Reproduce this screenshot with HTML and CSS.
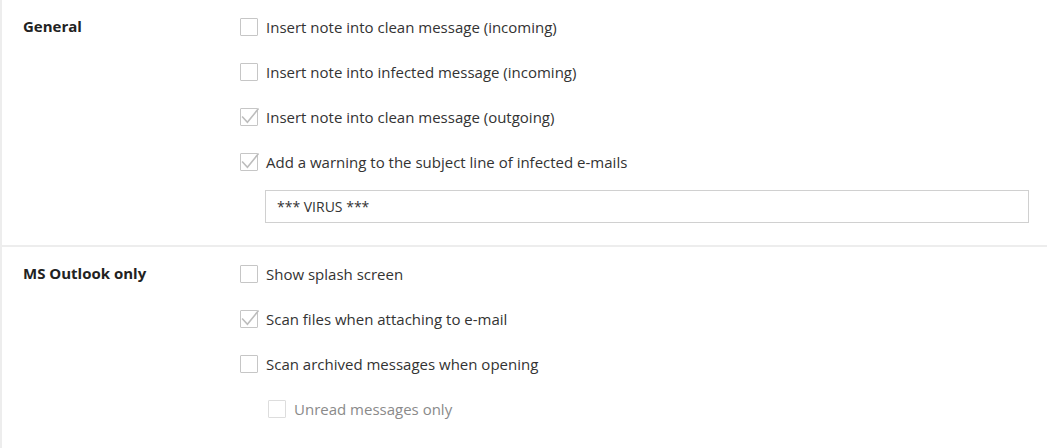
FILE: index.html
```html
<!DOCTYPE html>
<html>
<head>
<meta charset="utf-8">
<link rel="stylesheet" href="styles.css">
</head>
<body>
<div class="page">
  <section class="section first">
    <div class="label">General</div>
    <div class="options">
      <div class="row"><span class="box"></span><span class="text">Insert note into clean message (incoming)</span></div>
      <div class="row"><span class="box"></span><span class="text">Insert note into infected message (incoming)</span></div>
      <div class="row"><span class="box checked"><svg viewBox="0 0 17 17"><path d="M2 8 L7 13.5 L17.5 0.5" /></svg></span><span class="text">Insert note into clean message (outgoing)</span></div>
      <div class="row"><span class="box checked"><svg viewBox="0 0 17 17"><path d="M2 8 L7 13.5 L17.5 0.5" /></svg></span><span class="text">Add a warning to the subject line of infected e-mails</span></div>
      <div class="field">*** VIRUS ***</div>
    </div>
  </section>
  <section class="section second">
    <div class="label">MS Outlook only</div>
    <div class="options">
      <div class="row"><span class="box"></span><span class="text">Show splash screen</span></div>
      <div class="row"><span class="box checked"><svg viewBox="0 0 17 17"><path d="M2 8 L7 13.5 L17.5 0.5" /></svg></span><span class="text">Scan files when attaching to e-mail</span></div>
      <div class="row"><span class="box"></span><span class="text">Scan archived messages when opening</span></div>
      <div class="row sub disabled"><span class="box"></span><span class="text">Unread messages only</span></div>
    </div>
  </section>
</div>
</body>
</html>
```

FILE: styles.css
```css
html, body {
  margin: 0;
  padding: 0;
  background: #ffffff;
}
body {
  font-family: "Open Sans", "Liberation Sans", sans-serif;
  font-size: 15px;
  color: #333333;
}
.page {
  border-left: 2px solid #ededed;
  min-height: 448px;
  box-sizing: border-box;
}
.section {
  display: grid;
  grid-template-columns: 217px 1fr;
  padding-left: 21px;
}
.section.first {
  padding-top: 4px;
  padding-bottom: 22px;
  border-bottom: 2px solid #ededed;
}
.section.second {
  padding-top: 4px;
}
.label {
  font-weight: 700;
  color: #222222;
  height: 45px;
  line-height: 45px;
}
.options {
  display: flex;
  flex-direction: column;
  padding-right: 18px;
}
.row {
  height: 45px;
  display: flex;
  align-items: center;
  gap: 8px;
}
.row.sub {
  padding-left: 28px;
}
.row.disabled .text {
  color: #8a8a8a;
}
.row.disabled .box {
  border-color: #dddddd;
}
.box {
  position: relative;
  width: 16px;
  height: 16px;
  border: 1px solid #c6c6c6;
  border-radius: 1px;
  flex: none;
  background: #fff;
}
.box svg {
  position: absolute;
  left: -1px;
  top: -1px;
  width: 18px;
  height: 18px;
  overflow: visible;
}
.box svg path {
  fill: none;
  stroke: #bdbdbd;
  stroke-width: 1.5;
}
.text {
  white-space: nowrap;
}
.field {
  margin-top: 6px;
  margin-left: 25px;
  height: 33px;
  box-sizing: border-box;
  border: 1.5px solid #d0d0d0;
  padding-left: 11px;
  display: flex;
  align-items: center;
  font-size: 14px;
  color: #333;
}
```
